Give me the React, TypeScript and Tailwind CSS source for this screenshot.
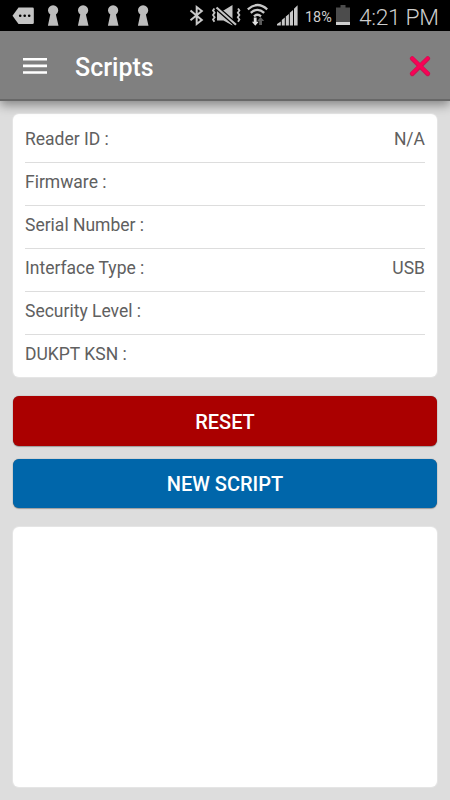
import type { ReactNode } from 'react';

interface InfoRow {
  label: string;
  value?: string;
}

const rows: InfoRow[] = [
  { label: 'Reader ID :', value: 'N/A' },
  { label: 'Firmware :' },
  { label: 'Serial Number :' },
  { label: 'Interface Type :', value: 'USB' },
  { label: 'Security Level :' },
  { label: 'DUKPT KSN :' },
];

function MessageIcon() {
  return (
    <svg width="22" height="31" viewBox="0 0 22 31">
      <path d="M6.5 7.4h14q1.3 0 1.3 1.3v14q0 1.3-1.3 1.3h-14L.5 15.7z" fill="#c4c4c4" />
      <circle cx="8.2" cy="15.7" r="1.3" />
      <circle cx="12.7" cy="15.7" r="1.3" />
      <circle cx="17.2" cy="15.7" r="1.3" />
    </svg>
  );
}

function KeyholeIcon() {
  return (
    <svg width="12" height="31" viewBox="0 0 12 31">
      <path d="M3.3 14.6a5.1 5.1 0 1 1 5.6 0l2.6 11.2H.9z" fill="#bdbdbd" />
    </svg>
  );
}

function BluetoothIcon() {
  return (
    <svg width="16" height="31" viewBox="0 0 16 31" fill="none" stroke="#c8c8c8" strokeWidth="2">
      <path d="M1.5 10.5 12.8 20 7.7 24V7l5.1 4L1.5 20.3" />
    </svg>
  );
}

function MuteIcon() {
  return (
    <svg width="32" height="31" viewBox="0 0 32 31" fill="none">
      <path d="M6 10.5h6.5l9-5.5v20.5l-9-5H6z" fill="#c4c4c4" />
      <path d="M4 6.2 25 24.8" stroke="#000" strokeWidth="4.6" />
      <path d="M5.5 7.5 25 24.8" stroke="#c4c4c4" strokeWidth="2.2" />
      <path
        d="M3.4 8.5 2 10.5l1.6 2.2L2 15l1.6 2.2L2 19.5l1.4 2.3M27 8.5l1.4 2-1.6 2.2 1.6 2.3-1.6 2.2 1.6 2.3-1.4 2.3"
        stroke="#c4c4c4"
        strokeWidth="1.8"
      />
    </svg>
  );
}

function WifiIcon() {
  return (
    <svg width="22" height="31" viewBox="0 0 22 31" fill="none">
      <path d="M.8 9.3q9.7-8.6 19.4 0M3.8 12.9q6.7-6 13.4 0M7 16.4q3.5-3.2 7 0" stroke="#c8c8c8" strokeWidth="2.3" />
      <path d="M6.8 17.5h2.8v4.2h2.1l-3.4 4-3.4-4h1.9z" fill="#e0e0e0" />
      <path d="M12.2 25v-4h-2l3.4-4 3.6 4H15v4z" fill="#5c5c5c" />
    </svg>
  );
}

function SignalIcon() {
  return (
    <svg width="22" height="31" viewBox="0 0 22 31">
      <path
        d="M0 25.5v-1.5L3.8 21.5v4zM4.8 25.5V20l3-2.5v8zM8.8 25.5v-9l3.1-2.5v11.5zM12.8 25.5V12.8l3.2-2.7v15.4zM17 25.5V8.8l3.6-3.5v20.2z"
        fill="#c8c8c8"
      />
    </svg>
  );
}

function BatteryIcon() {
  return (
    <svg width="14" height="31" viewBox="0 0 14 31">
      <path d="M4.5 5h5v2.5H14V22H0V7.5h4.5z" fill="#4c4c4c" />
      <path d="M0 22h14v3H0z" fill="#cfcfcf" />
    </svg>
  );
}

function StatusBar() {
  return (
    <div className="flex h-[31px] shrink-0 bg-black pl-3 pr-[11px] text-[#cecece]">
      <div className="flex">
        <MessageIcon />
        <div className="ml-[13px] flex gap-[18px]">
          <KeyholeIcon />
          <KeyholeIcon />
          <KeyholeIcon />
          <KeyholeIcon />
        </div>
      </div>
      <div className="ml-auto flex whitespace-nowrap">
        <BluetoothIcon />
        <span className="ml-[6px] flex"><MuteIcon /></span>
        <span className="ml-[4px] flex"><WifiIcon /></span>
        <span className="ml-[8px] flex"><SignalIcon /></span>
        <span className="ml-[6px] w-[31px] text-[14.4px] leading-[35px]">18%</span>
        <BatteryIcon />
        <span className="ml-[9px] w-[80px] text-[22.8px] font-light leading-[35px] tracking-[-0.35px]">4:21 PM</span>
      </div>
    </div>
  );
}

function Header() {
  return (
    <header className="relative z-10 flex h-[70px] shrink-0 items-center border-b-2 border-[#686868] bg-[#808080] pl-[23px] pr-[19px] pt-[2px] shadow-[0_4px_10px_rgba(0,0,0,0.4)]">
      <button type="button" className="flex" aria-label="Menu">
        <svg width="24" height="16" viewBox="0 0 24 16" fill="#fff">
          <path d="M0 0h24v2.6H0zM0 6.6h24v2.6H0zM0 13.2h24v2.6H0z" />
        </svg>
      </button>
      <h1 className="ml-7 pt-1 text-[25px] font-medium leading-8 text-white">Scripts</h1>
      <button type="button" className="ml-auto flex" aria-label="Disconnect">
        <svg width="22" height="22" viewBox="0 0 22 22" fill="none" strokeLinecap="round">
          <path d="M3.3 3.6l15.4 15.2M18.7 3.6L3.3 18.8" stroke="#cc1450" strokeWidth="4.8" />
          <path d="M3.3 3.2l15.4 15.2M18.7 3.2L3.3 18.4" stroke="#fa0057" strokeWidth="3" />
        </svg>
      </button>
    </header>
  );
}

function Card({ children, className }: { children?: ReactNode; className: string }) {
  return (
    <section className={`shrink-0 rounded-md bg-white shadow-[0_0_0_1px_rgba(255,255,255,0.25)] ${className}`}>
      {children}
    </section>
  );
}

export default function App() {
  return (
    <div className="flex h-[800px] w-[450px] flex-col overflow-hidden bg-[#dddddd] font-['Roboto',sans-serif]">
      <StatusBar />
      <Header />
      <main className="flex flex-1 flex-col px-[13px] pt-[13px]">
        <Card className="h-[263px] px-3 pt-[6px]">
          {rows.map((row) => (
            <div
              key={row.label}
              className="flex h-[43px] items-center justify-between border-b border-[#dddddd] pb-[3px] text-[17.5px] text-[#606060] last:border-b-0 last:pb-1"
            >
              <span>{row.label}</span>
              <span>{row.value}</span>
            </div>
          ))}
        </Card>
        <button
          type="button"
          className="mt-[19px] h-[49.5px] shrink-0 rounded-md bg-[#aa0000] pt-[2px] text-[20px] font-medium tracking-[-0.05px] text-white shadow-[0_0_1px_rgba(0,0,0,0.5),0_1px_1px_rgba(0,0,0,0.25)]"
        >
          RESET
        </button>
        <button
          type="button"
          className="mt-[13px] h-[49.5px] shrink-0 rounded-md bg-[#0066aa] pt-[2px] text-[20px] font-medium text-white shadow-[0_0_1px_rgba(0,0,0,0.5),0_1px_1px_rgba(0,0,0,0.25)]"
        >
          NEW SCRIPT
        </button>
        <Card className="mt-[19px] h-[260px]" />
      </main>
    </div>
  );
}
